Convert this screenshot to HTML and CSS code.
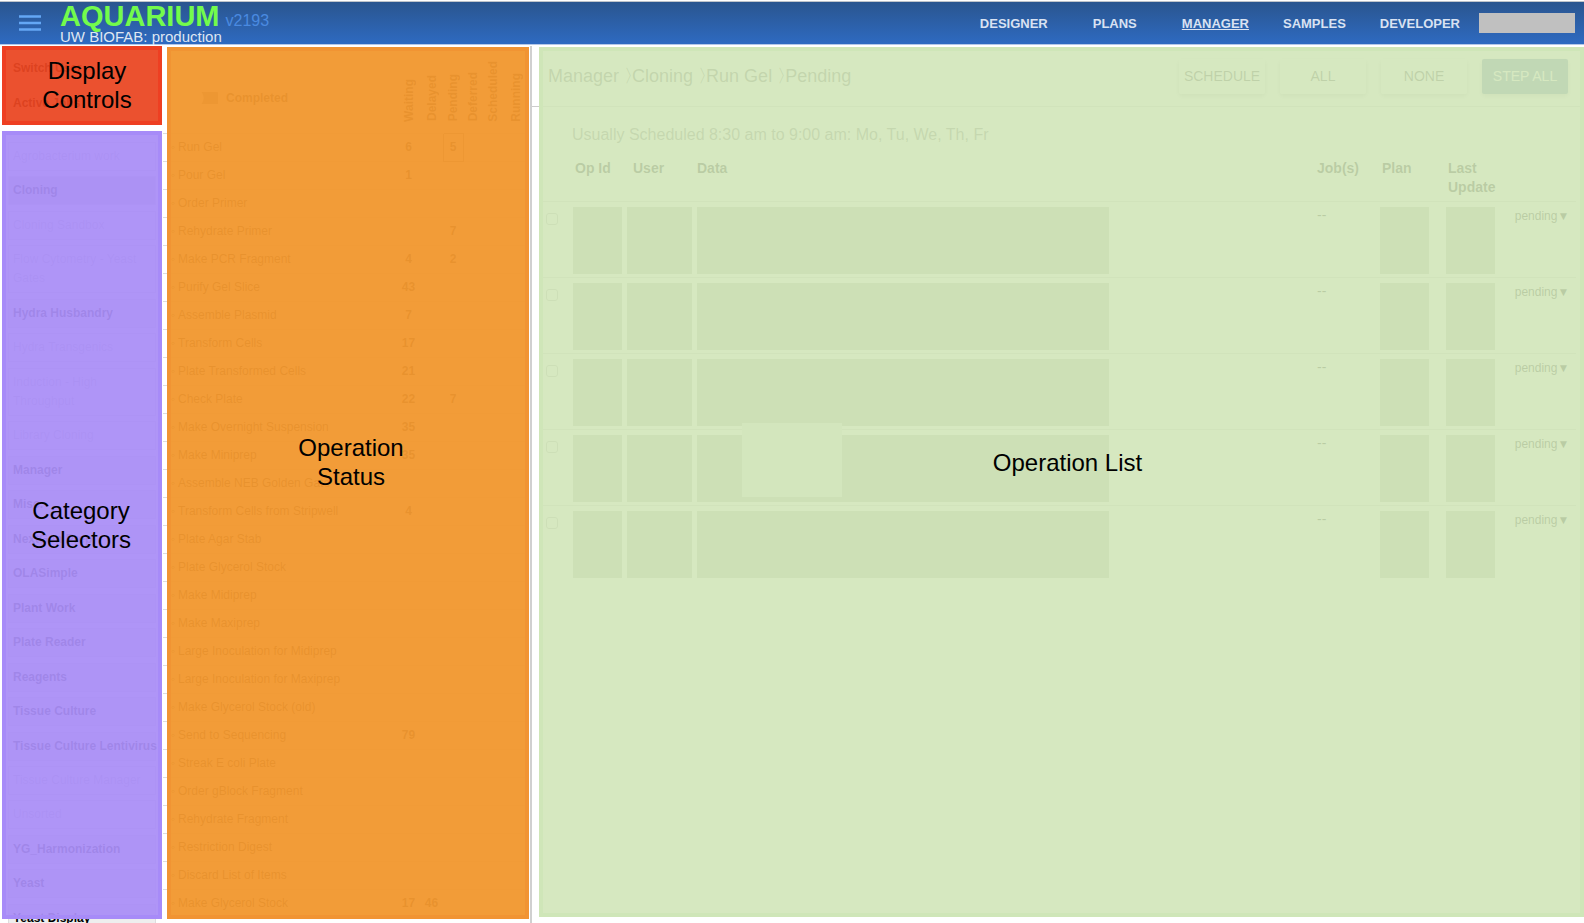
FILE: index.html
```html
<!DOCTYPE html>
<html lang="en">
<head>
<meta charset="utf-8">
<title>Aquarium Manager</title>
<link rel="stylesheet" href="styles.css">
</head>
<body>
<header class="topbar">
  <button class="menu" aria-label="Menu"><svg width="22" height="16" viewBox="0 0 22 16"><path d="M0 1.5h22M0 8h22M0 14.5h22" stroke="#64a7f5" stroke-width="2.4"/></svg></button>
  <div class="brand">
    <div class="brand-row"><span class="name">AQUARIUM</span><span class="version">v2193</span></div>
    <div class="instance">UW BIOFAB: production</div>
  </div>
  <nav class="nav">
    <a href="#">DESIGNER</a><a href="#">PLANS</a><a href="#" class="current">MANAGER</a><a href="#">SAMPLES</a><a href="#">DEVELOPER</a>
  </nav>
  <div class="user"></div>
</header>
<main class="main">
  <aside class="side">
    <section class="controls">
      <button>Switch User</button>
      <button>Active Jobs</button>
      <div class="cover red"><span>Display<br>Controls</span></div>
    </section>
    <section class="categories">
      <div class="cat-list" id="cats"></div>
      <div class="cover purple"><span>Category<br>Selectors</span></div>
    </section>
  </aside>
  <section class="status">
    <table class="ops">
      <thead><tr>
        <th class="op"><label class="toggle"><input type="checkbox"><span>Completed</span></label></th>
        <th><span class="vert">Waiting</span></th><th><span class="vert">Delayed</span></th><th><span class="vert">Pending</span></th><th><span class="vert">Deferred</span></th><th><span class="vert">Scheduled</span></th><th><span class="vert">Running</span></th>
      </tr></thead>
      <tbody id="ops"></tbody>
    </table>
    <div class="cover orange"><span>Operation<br>Status</span></div>
  </section>
  <section class="list">
    <div class="list-head">
      <h1>Manager <span class="sep">〉</span>Cloning <span class="sep">〉</span>Run Gel <span class="sep">〉</span>Pending</h1>
      <div class="actions"><button>SCHEDULE</button><button>ALL</button><button>NONE</button><button class="primary">STEP ALL</button></div>
    </div>
    <p class="when">Usually Scheduled 8:30 am to 9:00 am: Mo, Tu, We, Th, Fr</p>
    <div class="jobs-wrap">
    <table class="jobs">
      <colgroup><col class="c-check"><col class="c-id"><col class="c-user"><col class="c-data"><col><col class="c-job"><col class="c-plan"><col class="c-last"><col class="c-state"></colgroup>
      <thead><tr><th></th><th>Op Id</th><th>User</th><th>Data</th><th></th><th>Job(s)</th><th>Plan</th><th>Last Update</th><th></th></tr></thead>
      <tbody id="jobs"></tbody>
    </table>
    </div>
    <div class="cover green"><span>Operation List</span></div>
  </section>
</main>
<script src="app.js"></script>
</body>
</html>
```
FILE: styles.css
```css
* { box-sizing: border-box; }
body { margin: 0; height: 100vh; overflow: hidden; display: flex; flex-direction: column; background: #fff; font-family: "Liberation Sans", Arial, sans-serif; color: #000; }
button { font: inherit; border: 0; background: none; padding: 0; }

.topbar { display: flex; align-items: center; flex: none; height: 44px; margin: 1px 0; padding: 0 9px 0 19px; border-top: 1px solid #bfc4ca; border-bottom: 1px solid #b4c8e8; background: linear-gradient(#2a558f, #2e6ac1); }
.menu { display: flex; width: 22px; margin-right: 19px; }
.brand { padding-bottom: 1px; }
.brand-row { display: flex; align-items: baseline; line-height: 28px; }
.name { font-size: 29px; font-weight: bold; color: #73fb4c; }
.version { margin-left: 6px; font-size: 16px; color: #4a8ae0; }
.instance { margin-top: -5px; font-size: 15px; line-height: 14px; color: #dfe6f2; }
.nav { display: flex; gap: 34px; margin-left: auto; margin-right: 19px; font-size: 13px; font-weight: bold; }
.nav a { color: #d9e2f2; text-decoration: none; }
.nav a:nth-child(2) { padding: 0 11px; }
.nav .current { text-decoration: underline; }
.user { width: 96px; height: 20px; background: #c0c0c0; }

.main { display: flex; flex: 1; min-height: 0; }
.cover { position: absolute; display: flex; align-items: center; justify-content: center; text-align: center; font-size: 24px; line-height: 29px; }

.side { display: flex; flex-direction: column; flex: none; width: 163px; }
.controls { position: relative; display: flex; flex-direction: column; gap: 15px; height: 85px; padding: 12px 13px; font-size: 12px; }
.controls button { text-align: left; font-weight: bold; line-height: 20px; }
.red { inset: 0 1px 6px 2px; padding-left: 10px; padding-bottom: 2px; border: 4px solid #ee3f22; background: rgba(234, 70, 34, .94); }
.categories { position: relative; flex: 1; min-height: 0; }
.cat-list { display: flex; flex-direction: column; justify-content: space-between; height: 100%; min-height: 802px; padding: 11px 7px 0 8px; }
.cat-list button { padding: 4px; border: 1px solid #ddd; background: #eee; font-size: 12px; line-height: 19px; text-align: left; font-weight: bold; white-space: nowrap; }
.cat-list .chosen { background: #ccc; }
.cat-list .idle { font-weight: normal; color: #bbb; background: #fff; }
.purple { inset: 0 1px 4px 2px; padding-right: 2px; border: 4px solid #a78bf8; background: rgba(170, 142, 246, .94); }

.status { position: relative; flex: none; width: 369px; border-right: 2px solid #d0d0d0; overflow: hidden; }
.ops { width: 363px; border-collapse: collapse; table-layout: fixed; }
.ops th { height: 87px; padding: 0 0 7px; vertical-align: bottom; width: 20px; }
.ops th.op { width: 234px; vertical-align: middle; padding: 18px 0 0 38px; text-align: left; font-size: 12px; }
.ops th:nth-child(2), .ops th:nth-child(3) { width: 23px; }
.ops th:nth-child(7) { width: 25px; }
.ops td { height: 28px; padding: 0; border-top: 1px solid #ddd; text-align: center; font-weight: bold; font-size: 12px; }
.ops td.op { padding-left: 8px; text-align: left; font-weight: normal; white-space: nowrap; }
.ops td.op::before { content: "◦"; display: inline-block; width: 7px; }
.ops td.selected { border: 1px solid #777; }
.vert { display: inline-block; writing-mode: vertical-rl; transform: rotate(180deg); font-size: 12px; line-height: 14px; }
.toggle { display: flex; align-items: center; gap: 6px; margin-left: -17px; }
.toggle input { appearance: none; flex: none; width: 36px; height: 20px; margin: 0; border-radius: 10px; background: radial-gradient(circle at 10px 10px, #fff 9px, transparent 10px), linear-gradient(#888, #888) 14px 4px / 20px 12px no-repeat; }
.orange { inset: 1px 1px 4px 4px; padding-bottom: 42px; padding-left: 6px; border: 4px solid #f19433; background: rgba(241, 152, 48, .96); }

.list { position: relative; flex: 1; min-width: 0; }
.list-head { display: flex; align-items: center; justify-content: space-between; height: 61px; padding: 0 16px; border-bottom: 1px solid #ccc; }
.list-head h1 { margin: 0; font-size: 18px; font-weight: normal; color: #555; white-space: nowrap; }
.sep { margin-right: -10px; }
.actions { display: flex; gap: 15px; }
.actions button { width: 86px; height: 35px; border-radius: 2px; box-shadow: 0 2px 5px rgba(0, 0, 0, .28); font-size: 14px; color: #333; }
.actions .primary { background: #3f6d9c; color: #fff; }
.when { margin: 18px 0 6px 40px; font-size: 16px; line-height: 20px; color: #666; }
.jobs-wrap { padding: 0 8px; }
.jobs { width: 100%; border-spacing: 0; table-layout: fixed; font-size: 14px; }
.c-check { width: 33px; } .c-id { width: 54px; } .c-user { width: 70px; } .c-data { width: 412px; } .c-job { width: 65px; } .c-plan { width: 66px; } .c-last { width: 66px; } .c-state { width: 62px; }
.jobs th { height: 51px; padding: 8px 0 0; vertical-align: top; text-align: left; line-height: 19px; border-bottom: 1px solid #ccc; }
.jobs th:nth-child(2) { padding-left: 2px; }
.jobs th:nth-child(3) { padding-left: 6px; }
.jobs td { height: 76px; padding: 5px 0 0; vertical-align: top; border-bottom: 1px solid #ccc; }
.jobs tr:last-child td { border-bottom: 0; }
.jobs td input { appearance: none; display: block; width: 12px; height: 12px; margin: 6px 0 0 6px; border: 1px solid #aaa; border-radius: 3px; background: #fff; }
.block { height: 67px; background: #a9b5a0; }
.id-block { width: 49px; }
.user-block { width: 65px; }
.plan-block { width: 49px; margin-left: -2px; }
.patch { position: absolute; top: 377px; left: 210px; width: 100px; height: 74px; background: #dde6dd; }
.state { display: block; width: 100%; padding-right: 6px; font-size: 12px; line-height: 18px; white-space: nowrap; }
.green { inset: 1px 0 6px 7px; padding-bottom: 40px; padding-left: 12px; border: 4px solid #cfe6b8; background: rgba(209, 229, 184, .89); }
```
FILE: app.js
```js
const cats = ["-Agrobacterium work", "*Cloning", "-Cloning Sandbox", "-Flow Cytometry - Yeast<br>Gates", "Hydra Husbandry", "-Hydra Transgenics", "-Induction - High<br>Throughput", "-Library Cloning", "Manager", "Misc.", "NextGen Prep", "OLASimple", "Plant Work", "Plate Reader", "Reagents", "Tissue Culture", "Tissue Culture Lentivirus", "-Tissue Culture Manager", "-Unsorted", "YG_Harmonization", "Yeast", "Yeast Display"];
document.getElementById("cats").innerHTML = cats.map(c => {
  const cls = c[0] === "-" ? "idle" : c[0] === "*" ? "chosen" : "";
  return `<button class="${cls}">${c.replace(/^[-*]/, "")}</button>`;
}).join("");

const ops = [["Run Gel", 6, "", 5], ["Pour Gel", 1], ["Order Primer"], ["Rehydrate Primer", "", "", 7], ["Make PCR Fragment", 4, "", 2], ["Purify Gel Slice", 43], ["Assemble Plasmid", 7], ["Transform Cells", 17], ["Plate Transformed Cells", 21], ["Check Plate", 22, "", 7], ["Make Overnight Suspension", 35], ["Make Miniprep", 35], ["Assemble NEB Golden Gate"], ["Transform Cells from Stripwell", 4], ["Plate Agar Stab"], ["Plate Glycerol Stock"], ["Make Midiprep"], ["Make Maxiprep"], ["Large Inoculation for Midiprep"], ["Large Inoculation for Maxiprep"], ["Make Glycerol Stock (old)"], ["Send to Sequencing", 79], ["Streak E coli Plate"], ["Order gBlock Fragment"], ["Rehydrate Fragment"], ["Restriction Digest"], ["Discard List of Items"], ["Make Glycerol Stock", 17, 46]];
document.getElementById("ops").innerHTML = ops.map((r, n) => {
  let cells = "";
  for (let i = 1; i < 7; i++) cells += `<td${n === 0 && i === 3 ? ' class="selected"' : ""}>${r[i] || ""}</td>`;
  return `<tr><td class="op">${r[0]}</td>${cells}</tr>`;
}).join("");

let rows = "";
for (let i = 0; i < 5; i++) {
  rows += `<tr><td><input type="checkbox" aria-label="Select operation ${i + 1}"></td><td><div class="block id-block"></div></td><td><div class="block user-block"></div></td><td><div class="block"></div>${i === 3 ? '<div class="patch"></div>' : ""}</td><td></td><td>--</td><td><div class="block plan-block"></div></td><td><div class="block plan-block"></div></td><td><button class="state">pending▼</button></td></tr>`;
}
document.getElementById("jobs").innerHTML = rows;
```
